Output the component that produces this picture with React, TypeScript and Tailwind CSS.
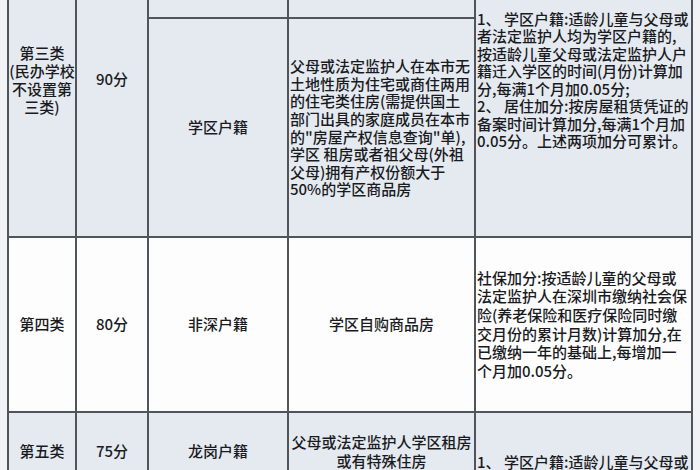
const cjk = "font-['Noto_Sans_CJK_SC','Noto_Sans',sans-serif]";

const row3Rules = [
  '父母或法定监护人在本市无',
  '土地性质为住宅或商住两用',
  '的住宅类住房(需提供国土',
  '部门出具的家庭成员在本市',
  '的"房屋产权信息查询"单),',
  '学区 租房或者祖父母(外祖',
  '父母)拥有产权份额大于',
  '50%的学区商品房',
];

const row3Points = [
  '1、 学区户籍:适龄儿童与父母或',
  '者法定监护人均为学区户籍的,',
  '按适龄儿童父母或法定监护人户',
  '籍迁入学区的时间(月份)计算加',
  '分,每满1个月加0.05分;',
  '2、 居住加分:按房屋租赁凭证的',
  '备案时间计算加分,每满1个月加',
  '0.05分。上述两项加分可累计。',
];

const row4Points = [
  '社保加分:按适龄儿童的父母或',
  '法定监护人在深圳市缴纳社会保',
  '险(养老保险和医疗保险同时缴',
  '交月份的累计月数)计算加分,在',
  '已缴纳一年的基础上,每增加一',
  '个月加0.05分。',
];

const row5Points = [
  '1、 学区户籍:适龄儿童与父母或',
  '者法定监护人均为学区户籍的,',
  '按适龄儿童父母或法定监护人户',
];

function Lines({ lines, className = '' }: { lines: string[]; className?: string }) {
  return (
    <div className={className}>
      {lines.map((l, i) => (
        <div key={i} className="whitespace-nowrap">{l}</div>
      ))}
    </div>
  );
}

const cell = 'border-r-2 border-b-2 border-[#50555c] flex items-center justify-center text-center';
const blue = 'bg-[#e5eaf1]';
const white = 'bg-[#fdfdfd]';

export default function App() {
  return (
    <div className={`w-[700px] h-[470px] overflow-hidden bg-[#f1f3f6] text-[15px] font-medium text-[#1a1b1e] ${cjk}`}>
      <div className="-mt-[79px] ml-[7px] w-[686px] grid grid-cols-[68px_72px_140px_187px_217px] grid-rows-[96px_219px_175px_78px] border-l-2 border-t-2 border-[#50555c]">
        {/* 第三类 */}
        <div className={`${cell} ${blue} row-span-2 leading-[18px]`}>
          <Lines lines={['第三类', '(民办学校', '不设置第', '三类)']} />
        </div>
        <div className={`${cell} ${blue} row-span-2`}>90分</div>
        <div className={`${cell} ${blue}`} />
        <div className={`${cell} ${blue}`} />
        <div className={`${cell} ${blue} row-span-2 !justify-start !text-left pl-[1px] leading-[17.5px]`}>
          <Lines lines={row3Points} />
        </div>
        <div className={`${cell} ${blue}`}>学区户籍</div>
        <div className={`${cell} ${blue} !justify-start !text-left pl-[1px] leading-[17.6px]`}>
          <Lines lines={row3Rules} />
        </div>

        {/* 第四类 */}
        <div className={`${cell} ${white}`}>第四类</div>
        <div className={`${cell} ${white}`}>80分</div>
        <div className={`${cell} ${white}`}>非深户籍</div>
        <div className={`${cell} ${white}`}>学区自购商品房</div>
        <div className={`${cell} ${white} !justify-start !text-left pl-[1px] leading-[18.6px]`}>
          <Lines lines={row4Points} />
        </div>

        {/* 第五类 */}
        <div className={`${cell} ${blue}`}>第五类</div>
        <div className={`${cell} ${blue}`}>75分</div>
        <div className={`${cell} ${blue}`}>龙岗户籍</div>
        <div className={`${cell} ${blue} leading-[19px]`}>
          <Lines lines={['父母或法定监护人学区租房', '或有特殊住房']} />
        </div>
        <div className={`${cell} ${blue} !items-start !justify-start !text-left pl-[1px] pt-[40px] leading-[18px]`}>
          <Lines lines={row5Points} />
        </div>
      </div>
    </div>
  );
}
